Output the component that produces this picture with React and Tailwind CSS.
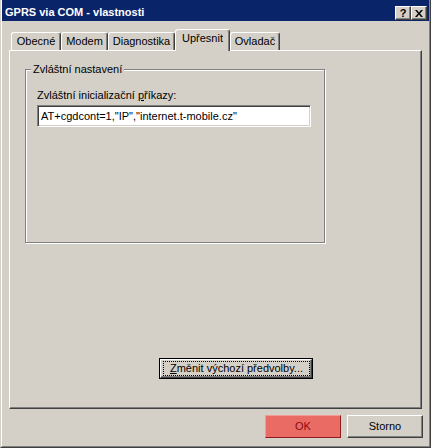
export default function App() {
  const tabBase =
    "flex justify-center pt-[2px] leading-[13px] bg-[#d4d0c8] border-t border-l border-white border-r border-r-[#404040] shadow-[inset_-1px_0_0_#808080] rounded-t-[3px]";
  const capBtn =
    "w-[16px] h-[14px] flex items-center justify-center bg-[#d4d0c8] border border-t-white border-l-white border-r-[#404040] border-b-[#404040] shadow-[inset_-1px_-1px_0_#808080]";
  return (
    <div className="w-[431px] h-[448px] bg-[#d4d0c8] border-l border-l-[#d4d0c8] border-r border-r-[#404040] border-b border-b-[#404040] font-['Liberation_Sans',Arial,sans-serif] text-[11px] text-black">
      <div className="h-full flex flex-col border-l border-l-white border-r border-r-[#808080] border-b border-b-[#808080]">
        {/* Title bar */}
        <div className="h-[21px] shrink-0 bg-[#0a246a] flex items-start pl-[3px] pr-[2px]">
          <div className="mt-[6px] flex-1 text-white font-bold leading-[13px] text-[11px]">
            GPRS via COM - vlastnosti
          </div>
          <div className="mt-[6px] flex">
            <div className={capBtn}>
              <span className="font-bold text-[11px] leading-none text-black">?</span>
            </div>
            <div className={capBtn}>
              <svg width="8" height="7" viewBox="0 0 8 7">
                <path d="M0 0h2l2 2.4L6 0h2L5 3.5 8 7H6L4 4.6 2 7H0l3-3.5z" fill="#000" />
              </svg>
            </div>
          </div>
        </div>

        {/* Tabs */}
        <div className="mt-[8px] h-[21px] shrink-0 mx-[7px] pl-[2px] flex items-end">
          <div className={`${tabBase} w-[50px] h-[18px]`}>Obecné</div>
          <div className={`${tabBase} w-[47px] h-[18px]`}>Modem</div>
          <div className={`${tabBase} w-[67px] h-[18px]`}>Diagnostika</div>
          <div className={`${tabBase} w-[55px] h-[22px] -mb-px relative z-10`}>Upřesnit</div>
          <div className={`${tabBase} w-[50px] h-[18px]`}>Ovladač</div>
        </div>

        {/* Panel */}
        <div className="flex-1 mx-[7px] flex flex-col border-t border-l border-white border-r border-b border-r-[#404040] border-b-[#404040] shadow-[inset_-1px_-1px_0_#808080]">
          <fieldset className="mt-[12px] ml-[15px] w-[300px] h-[180px] border border-[#808080] shadow-[inset_1px_1px_0_#ffffff,1px_1px_0_#ffffff]">
            <legend className="ml-[5px] px-[2px] leading-[13px] bg-[#d4d0c8]">Zvláštní nastavení</legend>
            <div className="pl-[11px] flex flex-col">
              <div className="mt-[13px] leading-[13px]">
                Zvláštní inicializační <span className="underline">p</span>říkazy:
              </div>
              <div className="mt-[3px] w-[274px] h-[22px] flex items-center pl-[3px] bg-white border border-t-[#808080] border-l-[#808080] border-r-white border-b-white shadow-[inset_1px_1px_0_#404040,inset_-1px_-1px_0_#d4d0c8] leading-[13px]">
                AT+cgdcont=1,"IP","internet.t-mobile.cz"
              </div>
            </div>
          </fieldset>
          <div className="flex-1" />
          <div className="ml-[149px] mb-[29px] w-[154px] h-[21px] border border-black">
            <div className="w-full h-full pl-[2px] p-[1px] border border-t-white border-l-white border-r-[#404040] border-b-[#404040] shadow-[inset_-1px_-1px_0_#808080]">
              <div className="w-full h-full border border-dotted border-black flex items-center justify-center leading-[13px]">
                <span>
                  <span className="underline">Z</span>měnit výchozí předvolby...
                </span>
              </div>
            </div>
          </div>
        </div>

        {/* Bottom buttons */}
        <div className="mt-[6px] mb-[8px] h-[23px] shrink-0 flex justify-end gap-[6px] pr-[6px]">
          <div className="w-[76px] h-[23px] flex items-center justify-center bg-[#ea6a64] border border-t-[#f29a94] border-l-[#f29a94] border-r-[#8e1c1c] border-b-[#8e1c1c] text-[#8a0c10] leading-[13px]">
            OK
          </div>
          <div className="w-[76px] h-[23px] flex items-center justify-center bg-[#d4d0c8] border border-t-white border-l-white border-r-[#404040] border-b-[#404040] shadow-[inset_-1px_-1px_0_#808080] leading-[13px]">
            Storno
          </div>
        </div>
      </div>
    </div>
  );
}
